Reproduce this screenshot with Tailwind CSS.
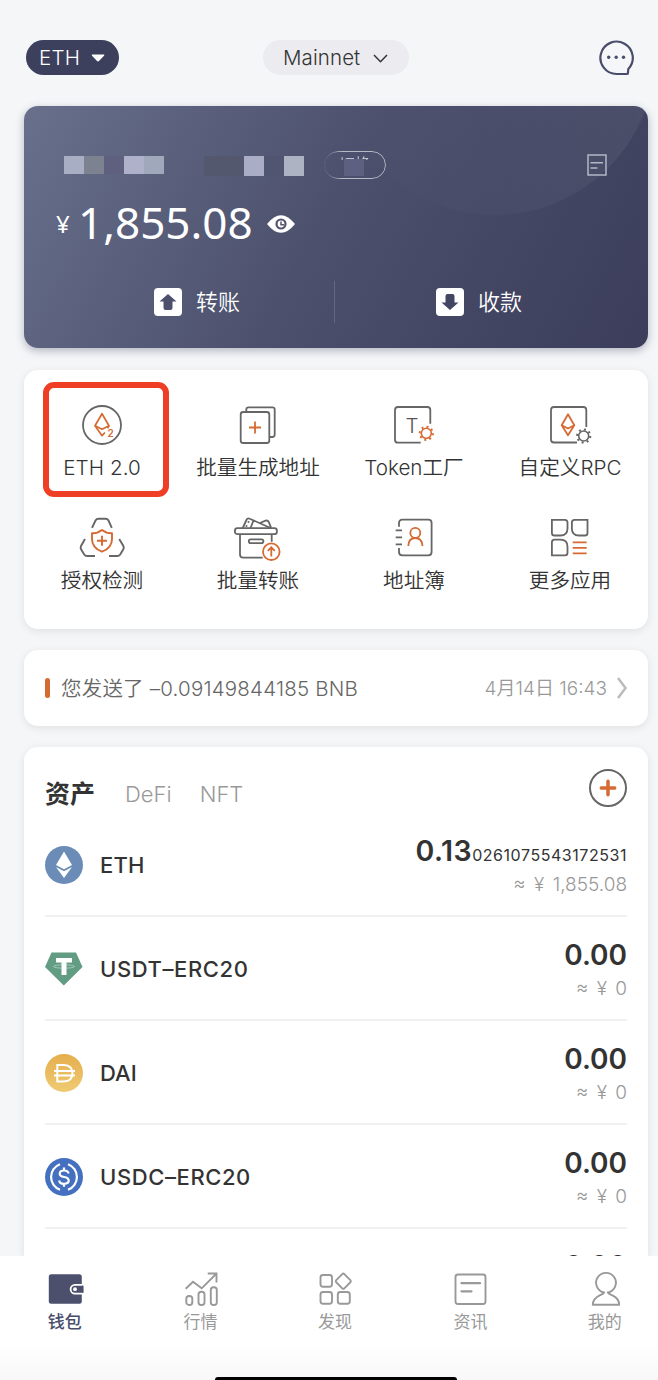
<!DOCTYPE html>
<html lang="zh-CN">
  <head>
    <meta charset="UTF-8" />
    <meta name="viewport" content="width=device-width, initial-scale=1" />
    <title>钱包</title>
    <script src="https://cdn.jsdelivr.net/npm/@tailwindcss/browser@4"></script>
  </head>
  <body class="h-[1380px] overflow-hidden bg-[#f4f6f8] font-['Inter','Noto_Sans_CJK_SC',sans-serif] text-[#333]">
    <div class="flex h-[1380px] w-[672px] flex-col">
      <!-- Top bar -->
      <header class="flex h-[106px] shrink-0 items-start pt-10 pl-[26px]">
        <button class="flex h-[35px] w-[93px] items-center gap-[11px] rounded-full bg-[#3c405d] pt-px pl-[13px] text-[20.5px] font-light tracking-[0.2px] text-white">
          ETH
          <svg class="h-[8px] w-[14px]" viewBox="0 0 14 8" fill="#fff"><path d="M1.5 .5h11q1.5 0 .5 1.2L8.2 6.8q-1.2 1.2-2.4 0L1 1.700Q0 .5 1.500 .5z" /></svg>
        </button>
        <button class="ml-[144px] flex h-[35px] w-[146px] items-center gap-[13px] rounded-full bg-[#ececf0] pt-px pl-[20px] text-[20.5px] font-light tracking-[0.1px] text-[#333]">
          Mainnet
          <svg class="h-[9px] w-[15px]" viewBox="0 0 15 9" fill="none" stroke="#333" stroke-width="1.5"><path d="M1 1l6.500 6.700L14 1" /></svg>
        </button>
        <svg class="ml-[189px] h-[36px] w-[36px]" viewBox="0 0 36 36" fill="none" stroke="#494d6b" stroke-width="2.200">
          <path d="M30.300 29A16.200 16.200 0 1 0 18.500 34H29q.9 0 .9-.8z" stroke-linejoin="round" />
          <g fill="#494d6b" stroke="none"><circle cx="10.700" cy="17.200" r="1.700" /><circle cx="18.200" cy="17.200" r="1.700" /><circle cx="25.500" cy="17.200" r="1.700" /></g>
        </svg>
      </header>

      <!-- Balance card -->
      <section class="relative mx-6 h-[242px] shrink-0 rounded-[14px] bg-linear-[118deg,#68708b_0%,#4c506d_48%,#3b3d5a_100%] text-white shadow-[0_3px_8px_rgba(60,64,93,0.35)]">
        <div class="absolute inset-0 overflow-hidden rounded-[14px]">
          <div class="absolute -top-[211px] left-[311px] h-[320px] w-[320px] rounded-full bg-linear-to-r from-white/0 via-white/2 to-white/6"></div>
        </div>
        <div class="relative flex h-full flex-col">
          <div class="flex h-[73px] items-start pt-[45px] pl-[40px]">
            <div class="mt-[5px] flex h-[18px]">
              <span class="w-5 bg-[#a8aec4]"></span>
              <span class="w-5 bg-[#7c8290]"></span>
              <span class="w-5 bg-[#5f6080]"></span>
              <span class="w-5 bg-[#aeb1c9]"></span>
              <span class="w-5 bg-[#a0a9bb]"></span>
            </div>
            <div class="mt-[5px] ml-10 flex h-5">
              <span class="w-10 bg-[#53586f]"></span>
              <span class="w-5 bg-[#a9adc6]"></span>
              <span class="w-5 bg-[#505572]"></span>
              <span class="w-5 bg-[#adb3c2]"></span>
            </div>
            <div class="relative ml-[20px] h-[28px] w-[62px] rounded-full border border-white/60 mask-l-from-70% mask-l-to-100%">
              <div class="mx-auto mt-[3px] h-[5px] w-[34px] overflow-hidden text-center text-[16px] leading-[19px] font-light text-white/80">切换</div>
              <span class="absolute top-[7px] left-[19px] h-[17px] w-5 bg-[#5d6080]"></span>
            </div>
            <svg class="mt-[3px] ml-[201px] h-[22px] w-5" viewBox="0 0 20 22" fill="none" stroke="#b4b7c6" stroke-width="1.500"><path d="M1 1h18v20H1zM3.500 8.700h12.500M3.500 14h7" /></svg>
          </div>
          <div class="flex h-[88px] items-center pl-[32px]">
            <span class="mt-[2px] w-[22px] font-['Noto_Sans'] text-[24px]">¥</span>
            <span class="-mt-[3px] w-[180px] font-['Noto_Sans'] text-[44px] leading-[60px]">1,855.08</span>
            <svg class="mt-[1px] ml-[9px] h-[18px] w-[28px]" viewBox="0 0 28 18"><path d="M0 9Q14-8.500 28 9Q14 26.500 0 9z" fill="#fff" /><circle cx="14" cy="9" r="4.500" fill="#fff" stroke="#50546f" stroke-width="2.200" /><path d="M14 6.500v3.200h3" fill="none" stroke="#50546f" stroke-width="1.500" /></svg>
          </div>
          <div class="flex h-[70px] items-center">
            <div class="flex w-[310px] items-center gap-[14px] pl-[130px] text-[22px] font-[350]">
              <svg class="h-7 w-7" viewBox="0 0 28 28"><rect width="28" height="28" rx="4" fill="#fff" /><path d="M14 6l8.500 7.500h-4V20q0 2-2 2h-5q-2 0-2-2v-6.500h-4z" fill="#4c506d" /></svg>
              转账
            </div>
            <div class="h-[42px] w-px bg-white/15"></div>
            <div class="flex flex-1 items-center gap-[14px] pl-[101px] text-[22px] font-[350]">
              <svg class="h-7 w-7" viewBox="0 0 28 28"><rect width="28" height="28" rx="4" fill="#fff" /><path d="M14 22l8.500-7.500h-4V8q0-2-2-2h-5q-2 0-2 2v6.500h-4z" fill="#434663" /></svg>
              收款
            </div>
          </div>
        </div>
      </section>

      <!-- Shortcuts -->
      <section class="relative mx-6 mt-[22px] grid h-[259px] shrink-0 grid-cols-4 grid-rows-[113px_113px] rounded-[14px] bg-white pt-[31px] text-[20.6px] font-[350] text-[#333] shadow-[0_2px_8px_rgba(0,0,0,0.09)]">
        <div class="absolute top-[12px] left-[19px] h-[115px] w-[126px] rounded-[11px] border-6 border-[#ee3f26]"></div>
        <div class="flex flex-col items-center">
          <svg class="h-12 w-12" viewBox="0 0 48 48" fill="none" stroke="#666" stroke-width="1.800">
            <circle cx="24" cy="24" r="19" />
            <g stroke="#d56a33" stroke-width="1.700" stroke-linejoin="round"><path d="M27 31.500l-3 3.200-7-10 7-12 7 12-1.500 2.500" /><path d="M17 24.700l7 3.500 7-3.500" /></g>
            <text x="29.500" y="35.500" font-size="10" font-weight="600" fill="#d56a33" stroke="none">2</text>
          </svg>
          <span class="mt-[1px] leading-9 tracking-[0.1px]">ETH 2.0</span>
        </div>
        <div class="flex flex-col items-center">
          <svg class="h-12 w-12" viewBox="0 0 48 48" fill="none" stroke="#666" stroke-width="1.800">
            <rect x="6.700" y="11" width="28.600" height="31" rx="2.500" />
            <path d="M12.300 11V8.500q0-2.200 2.200-2.200h24q2.200 0 2.200 2.200V33.500q0 2.500-2.500 2.500h-2.700" />
            <path d="M15 26.500h12M21 20.500v12" stroke="#d56a33" />
          </svg>
          <span class="mt-[1px] leading-9">批量生成地址</span>
        </div>
        <div class="flex flex-col items-center">
          <svg class="h-12 w-12" viewBox="0 0 48 48" fill="none" stroke="#666" stroke-width="1.800">
            <path d="M30.700 41.700H8q-3 0-3-3V9q0-3 3-3h29.300q3 0 3 3v13.700" />
            <text x="22" y="32" font-size="20.500" font-weight="350" text-anchor="middle" fill="#555" stroke="none">T</text>
            <g stroke="#d56a33"><circle cx="36.300" cy="32.300" r="5" stroke-width="1.600" /><circle cx="36.300" cy="32.300" r="6.600" stroke-width="2" stroke-dasharray="2 3.184" /></g>
          </svg>
          <span class="mt-[1px] leading-9">Token工厂</span>
        </div>
        <div class="flex flex-col items-center">
          <svg class="h-12 w-12" viewBox="0 0 48 48" fill="none" stroke="#666" stroke-width="1.800">
            <path d="M31 41.500H8q-3 0-3-3V9q0-3 3-3h29.300q3 0 3 3v17" />
            <path d="M22 13.300l6.300 11L22 34.300l-6.300-10zM15.700 24.300L22 27.500l6.300-3.200" stroke="#d56a33" stroke-linejoin="round" />
            <circle cx="37.700" cy="35" r="5" stroke-width="1.600" /><circle cx="37.700" cy="35" r="6.600" stroke-width="2" stroke-dasharray="2 3.184" />
          </svg>
          <span class="mt-[1px] leading-9">自定义RPC</span>
        </div>
        <div class="flex flex-col items-center">
          <svg class="h-12 w-12" viewBox="0 0 48 48" fill="none" stroke="#666" stroke-width="1.900">
            <path d="M14 13.800l3.500-7.300q1-1.800 3-1.800h7q2 0 3 1.800l3.300 7.300M7 25l-4 7q-.8 1.800.2 3.500l3 5q1 1.500 2.800 1.500h8M31 42h8.200q2 0 3-1.500l3-5q1-1.700.2-3.500l-4.200-7" />
            <g stroke="#d56a33"><path d="M24 16q4.500 3.500 10 3.300v5.700q0 9-10 12.700-10-3.700-10-12.700v-5.700q5.500.2 10-3.300z" stroke-linejoin="round" /><path d="M19 26.700h10M24 21.700v10" /></g>
          </svg>
          <span class="mt-[1px] leading-9">授权检测</span>
        </div>
        <div class="flex flex-col items-center">
          <svg class="h-12 w-12" viewBox="0 0 48 48" fill="none" stroke="#666" stroke-width="1.800">
            <rect x=".9" y="14.200" width="42" height="6" rx="2.500" />
            <path d="M6 20.500v20q0 3.200 3.200 3.200h19.500M37.700 20.500v7.200" />
            <rect x="14.800" y="25.300" width="14.600" height="3.800" rx="1.900" />
            <path d="M8.700 14l4-8.500q1-1.800 3-.8L36 13.800M19.500 6.500l-3 7.500M26 9l5.500-2.300q2.200-.8 3.200 1.200l2.500 6" />
            <path d="M14.500 8v.1M12.500 12v.1" stroke-width="2" stroke-linecap="round" />
            <g stroke="#d56a33"><circle cx="37.300" cy="37.700" r="8.300" /><path d="M37.300 42.500V33.500M33.800 36.800l3.500-3.500 3.500 3.500" /></g>
          </svg>
          <span class="mt-[1px] leading-9">批量转账</span>
        </div>
        <div class="flex flex-col items-center">
          <svg class="h-12 w-12" viewBox="0 0 48 48" fill="none" stroke="#666" stroke-width="1.800">
            <path d="M9 12.700V9q0-3.300 3.300-3.300h26q3.300 0 3.300 3.300v29q0 3.300-3.300 3.300h-26Q9 41.300 9 38v-4M5.700 16.300H12M5.700 23.300H12M5.700 30.300H12" />
            <g stroke="#d56a33"><circle cx="25.300" cy="18.900" r="5" /><path d="M18.300 32q.3-8 7-8t7.200 8" /></g>
          </svg>
          <span class="mt-[1px] leading-9">地址簿</span>
        </div>
        <div class="flex flex-col items-center">
          <svg class="h-12 w-12" viewBox="0 0 48 48" fill="none" stroke="#666" stroke-width="1.800">
            <path d="M5.900 5.900h13q2.600 0 2.600 2.600v6q0 7-7 7h-6q-2.600 0-2.600-2.600zM41.500 5.900h-13q-2.600 0-2.600 2.600v6q0 7 7 7h6q2.600 0 2.600-2.600zM5.900 41.300h13q2.600 0 2.600-2.600v-6q0-7-7-7h-6q-2.600 0-2.600 2.600z" />
            <path d="M26.700 28.300h14M26.700 33.800h14M26.700 39.300h14" stroke="#d56a33" />
          </svg>
          <span class="mt-[1px] leading-9">更多应用</span>
        </div>
      </section>

      <!-- Latest transfer -->
      <section class="mx-6 mt-[21px] flex h-[76px] shrink-0 items-center rounded-[14px] bg-white pr-[20px] pl-[21px] shadow-[0_2px_8px_rgba(0,0,0,0.09)]">
        <span class="h-5 w-[5px] rounded-full bg-[#d56a33]"></span>
        <span class="mt-[2px] ml-[11px] text-[20.500px] font-[350] tracking-[0.2px] text-[#666]">您发送了 –0.09149844185 BNB</span>
        <span class="mt-[2px] ml-auto text-[19px] font-[350] text-[#999]">4月14日 16:43</span>
        <svg class="ml-[9px] h-[22px] w-[12px]" viewBox="0 0 12 22" fill="none" stroke="#bbb" stroke-width="2.500"><path d="M2 1l7.500 10L2 21" /></svg>
      </section>

      <!-- Assets -->
      <section class="mx-6 mt-[21px] h-[509px] shrink-0 overflow-hidden rounded-t-[14px] bg-white px-[21px] shadow-[0_2px_8px_rgba(0,0,0,0.09)]">
        <div class="flex h-[66px] items-start pt-[22px]">
          <h2 class="text-[25px] leading-[50px] font-bold">资产</h2>
          <span class="mt-[10px] ml-[30px] text-[22px] leading-[30px] font-light text-[#999]">DeFi</span>
          <span class="mt-[10px] ml-[28px] text-[22px] leading-[30px] font-light text-[#999]">NFT</span>
          <svg class="ml-auto h-[38px] w-[38px]" viewBox="0 0 38 38" fill="none"><circle cx="19" cy="19" r="18" stroke="#666" stroke-width="2" /><path d="M12.300 19h13.400M19 12.300v13.400" stroke="#d56a33" stroke-width="3.500" stroke-linecap="round" /></svg>
        </div>
        <div class="flex h-[104px] items-center border-b-2 border-[#f0f0f1] pt-[2px]">
          <svg class="h-[38px] w-[38px]" viewBox="0 0 38 38"><circle cx="19" cy="19" r="19" fill="#6c8cb8" /><path d="M19 5.500l8 13.500-8 4.300-8-4.300zM11 21l8 4.300L27 21l-8 11z" fill="#fff" /></svg>
          <span class="ml-[17px] text-[22px] font-medium tracking-[0.2px]">ETH</span>
          <div class="ml-auto pt-[5px] text-right">
            <div class="flex h-[34px] items-baseline justify-end text-[28.500px] leading-[34px] font-semibold tracking-[0.5px]">0.13<span class="text-[16px] leading-none font-normal tracking-[0.55px]">0261075543172531</span></div>
            <div class="text-[19px] leading-[34px] font-light [word-spacing:3px] text-[#999]">≈ ¥ 1,855.08</div>
          </div>
        </div>
        <div class="flex h-[104px] items-center border-b-2 border-[#f0f0f1] pt-[2px]">
          <svg class="h-[38px] w-[38px]" viewBox="0 0 38 38"><path d="M6.500 2.500h24.500L37.500 17 18.800 35.500 0 17z" fill="#629c82" /><path d="M11 8h16v4.500h-5.500V25h-5V12.500H11z" fill="#fff" /><ellipse cx="19" cy="16.500" rx="10.500" ry="1.700" fill="none" stroke="#fff" stroke-opacity=".6" stroke-width=".7" /></svg>
          <span class="ml-[17px] text-[22px] font-medium tracking-[0.6px]">USDT–ERC20</span>
          <div class="ml-auto pt-[5px] text-right">
            <div class="text-[28px] leading-[34px] font-semibold">0.00</div>
            <div class="text-[19px] leading-[34px] font-light [word-spacing:3px] text-[#999]">≈ ¥ 0</div>
          </div>
        </div>
        <div class="flex h-[104px] items-center border-b-2 border-[#f0f0f1] pt-[2px]">
          <svg class="h-[38px] w-[38px]" viewBox="0 0 38 38" fill="none">
            <defs><linearGradient id="dai" x1="0" y1="0" x2="0" y2="1"><stop stop-color="#e5ae4c" /><stop offset="1" stop-color="#efcb74" /></linearGradient></defs>
            <circle cx="19" cy="19" r="19" fill="url(#dai)" /><path d="M12.300 11h6.500q8.700.5 8.700 8.300t-8.700 8.300h-6.500zM9 17h21M9 21.500h21" stroke="#fff" stroke-width="2" />
          </svg>
          <span class="ml-[17px] text-[22px] font-medium">DAI</span>
          <div class="ml-auto pt-[5px] text-right">
            <div class="text-[28px] leading-[34px] font-semibold">0.00</div>
            <div class="text-[19px] leading-[34px] font-light [word-spacing:3px] text-[#999]">≈ ¥ 0</div>
          </div>
        </div>
        <div class="flex h-[104px] items-center border-b-2 border-[#f0f0f1] pt-[2px]">
          <svg class="h-[38px] w-[38px]" viewBox="0 0 38 38" fill="none" stroke="#fff" stroke-width="2.200">
            <circle cx="19" cy="19" r="19" fill="#4570c0" stroke="none" />
            <path d="M15 6.300a13.500 13.500 0 0 0 0 25.400M23 6.300a13.500 13.500 0 0 1 0 25.400" />
            <path d="M23.500 15.500q-.3-3-4.500-3-4.300 0-4.300 3.200 0 2.600 4.300 3.300 4.700.7 4.700 3.600 0 3.200-4.700 3.200t-4.700-3.200M19 9.500v3M19 25.800v3" />
          </svg>
          <span class="ml-[17px] text-[22px] font-medium tracking-[0.6px]">USDC–ERC20</span>
          <div class="ml-auto pt-[5px] text-right">
            <div class="text-[28px] leading-[34px] font-semibold">0.00</div>
            <div class="text-[19px] leading-[34px] font-light [word-spacing:3px] text-[#999]">≈ ¥ 0</div>
          </div>
        </div>
        <div class="pt-[20px] text-right text-[28px] leading-[34px] font-semibold">0.00</div>
      </section>

      <!-- Tab bar -->
      <nav class="relative grid h-[124px] shrink-0 grid-cols-5 bg-linear-to-b from-white from-70% to-[#f8f8f8] pt-[14px] text-[17px] text-[#999]">
        <a class="flex flex-col items-center font-medium text-[#494d6b]">
          <svg class="h-[38px] w-10" viewBox="0 0 40 38"><rect x="1.800" y="4.300" width="33" height="29.500" rx="2.500" fill="#4c506d" /><path d="M37 14.800h-9a4.400 4.400 0 0 0 0 8.800h9z" fill="#4c506d" stroke="#fff" stroke-width="1.800" /><path d="M35 15.700h1.500v7H35z" fill="#4c506d" /><circle cx="28" cy="19.200" r="1.900" fill="#fff" /></svg>
          <span class="mt-px -ml-[5px] leading-[26px]">钱包</span>
        </a>
        <a class="flex flex-col items-center">
          <svg class="h-[38px] w-10" viewBox="0 0 40 38" fill="none" stroke="#999" stroke-width="1.900"><rect x="4.300" y="26" width="6" height="9" rx="2.800" /><rect x="16.500" y="21.800" width="6" height="13.200" rx="2.800" /><rect x="28.800" y="17.200" width="6" height="17.800" rx="2.800" /><path d="M3.700 18.700l7.300-7 8.700 6.600L34 4M25.700 3.500h8.800v9" /></svg>
          <span class="mt-px -ml-[2px] leading-[26px]">行情</span>
        </a>
        <a class="flex flex-col items-center">
          <svg class="h-[38px] w-10" viewBox="0 0 40 38" fill="none" stroke="#999" stroke-width="1.900"><rect x="4.500" y="5" width="11.500" height="11.800" rx="2.500" /><rect x="4.500" y="22" width="11.500" height="11.800" rx="2.500" /><rect x="21.800" y="22" width="12" height="11.800" rx="2.500" /><rect x="21.500" y="5.500" width="11.500" height="11.500" rx="1.500" transform="rotate(45 27.300 11.300)" /></svg>
          <span class="mt-px -ml-[2px] leading-[26px]">发现</span>
        </a>
        <a class="flex flex-col items-center">
          <svg class="h-[38px] w-10" viewBox="0 0 40 38" fill="none" stroke="#999" stroke-width="1.900"><rect x="5.500" y="4.500" width="30" height="29.500" rx="2.500" /><path d="M11.500 13.200h18.500M11.500 21.300h10" stroke-width="2.300" stroke-linecap="round" /></svg>
          <span class="mt-px leading-[26px]">资讯</span>
        </a>
        <a class="flex flex-col items-center">
          <svg class="h-[38px] w-10" viewBox="0 0 40 38" fill="none" stroke="#999" stroke-width="1.900" stroke-linejoin="round"><path d="M19.200 22.500a9.900 9.900 0 1 1 3.600 0q.8 1.300 5 3.200 6.200 3 6.400 9.100H7.800q.2-6 6.400-9.100 4.200-1.900 5-3.200z" /></svg>
          <span class="mt-px leading-[26px]">我的</span>
        </a>
        <div class="absolute bottom-0 left-[215px] h-[3px] w-[242px] rounded-t-[3px] bg-black"></div>
      </nav>
    </div>
  </body>
</html>
